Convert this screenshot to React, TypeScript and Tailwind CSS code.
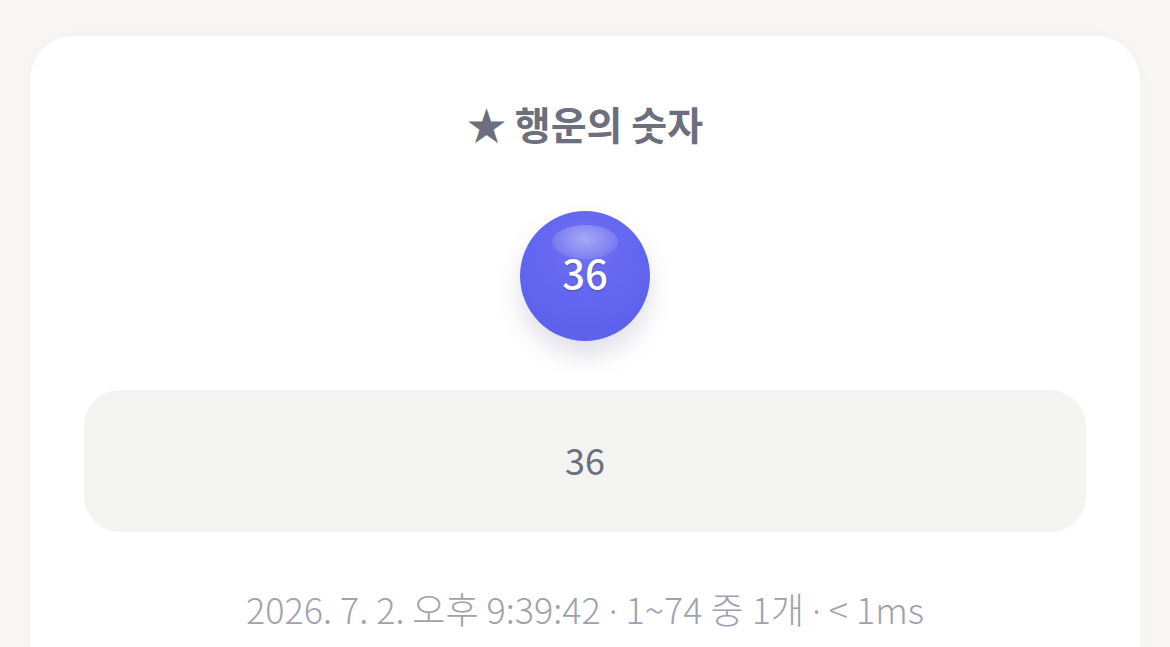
export default function App() {
  return (
    <div className="min-h-[647px] w-full bg-[#f7f6f5] px-[30px] pt-[36px] font-['Noto_Sans_CJK_KR','Noto_Sans',sans-serif]">
      <div className="flex flex-col items-center rounded-t-[44px] bg-white px-[54px] pt-[100px] pb-[40px] shadow-[0_0_12px_rgba(0,0,0,0.03)]">
        <h2 className="-mt-[38px] text-[39px] leading-[50px] font-bold text-[#6b6f7e]">★ 행운의 숫자</h2>

        <div className="relative mt-[63px] flex h-[130px] w-[130px] items-center justify-center rounded-full bg-[radial-gradient(circle_at_50%_30%,#6f72ef_0%,#6366f1_45%,#5a5de6_100%)] shadow-[0_14px_24px_rgba(80,80,120,0.18)]">
          <div className="absolute top-[14px] left-[32px] h-[34px] w-[66px] rounded-[50%] bg-[radial-gradient(ellipse_at_50%_40%,rgba(255,255,255,0.4)_0%,rgba(255,255,255,0.15)_60%,rgba(255,255,255,0)_100%)]" />
          <span className="relative -mt-[8px] text-[40px] leading-none font-medium text-white [text-shadow:0_1px_2px_rgba(0,0,0,0.25)]">36</span>
        </div>

        <div className="mt-[49px] flex h-[142px] w-full items-center justify-center rounded-[36px] bg-[#f3f3f2]">
          <span className="-mt-[5px] text-[36px] text-[#6b6f7e]">36</span>
        </div>

        <p className="mt-[53px] text-[36px] leading-[46px] font-light text-[#9fa2ae]">
          2026. 7. 2. 오후 9:39:42 <span className="font-['Noto_Sans']">·</span> 1~74 중 1개 <span className="font-['Noto_Sans']">·</span> &lt; 1ms
        </p>
      </div>
    </div>
  )
}
